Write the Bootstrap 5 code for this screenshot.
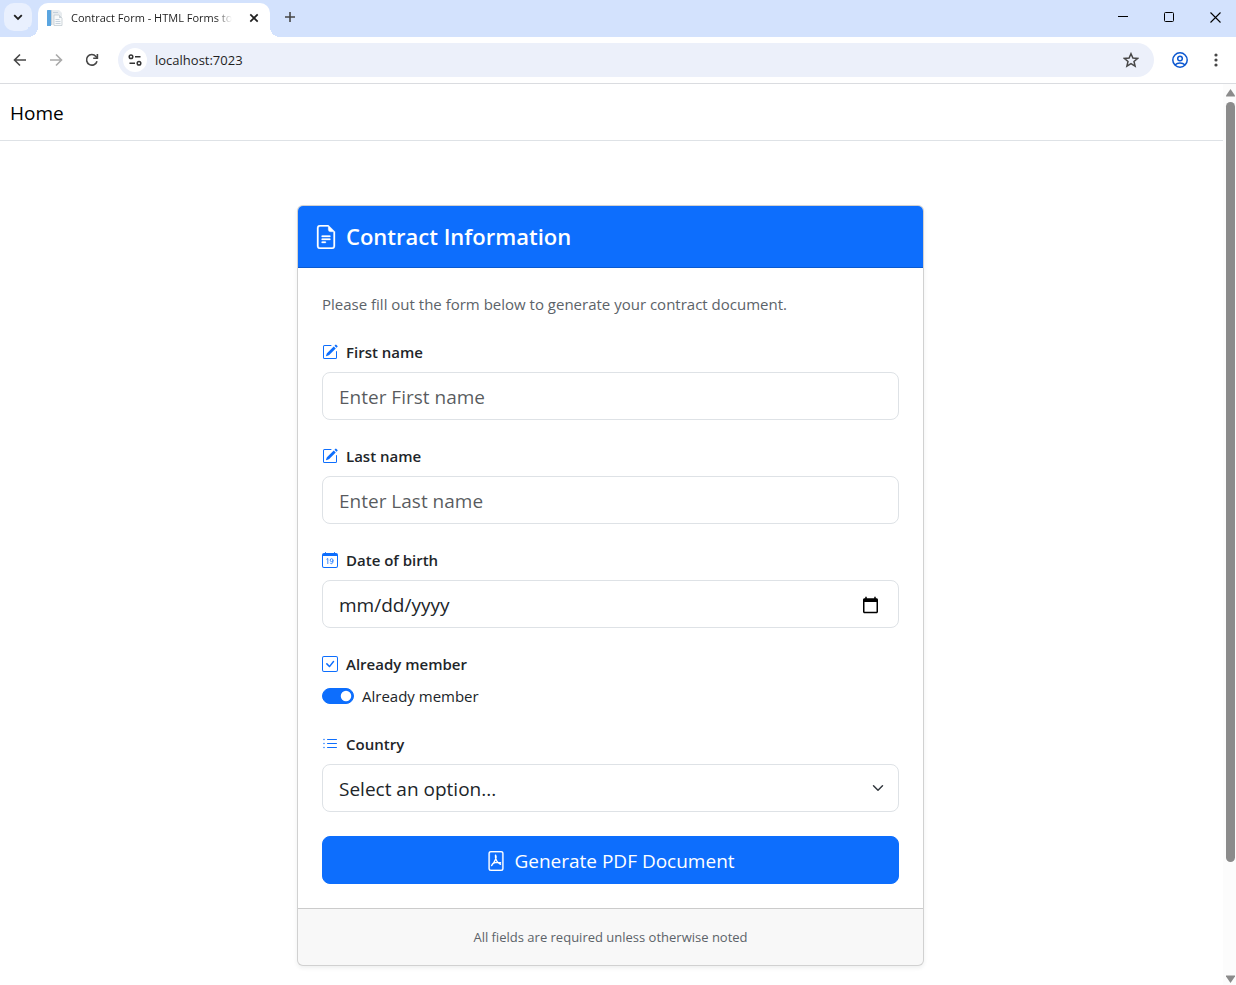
<!DOCTYPE html>
<html lang="en">
<head>
<meta charset="utf-8">
<meta name="viewport" content="width=device-width, initial-scale=1">
<title>Contract Form - HTML Forms to PDF</title>
<link href="https://cdn.jsdelivr.net/npm/bootstrap@5.3.0/dist/css/bootstrap.min.css" rel="stylesheet">
<style>
  body { font-family: "Open Sans", "Noto Sans", sans-serif; font-size: 15px; line-height: 24px; }
  svg { display: block; flex: none; }
  .plain-btn { background: none; border: 0; padding: 0; display: flex; align-items: center; justify-content: center; color: #474747; }

  /* browser window */
  .tab-strip { background: #d3e2fd; height: 37px; padding-left: 4px; }
  .tab-search { width: 28px; height: 28px; border-radius: 10px; background: #e9f0fe; color: #1f1f1f; margin: 3px 6px 0 0; }
  .page-tab { width: 232px; height: 34px; margin-top: 3px; padding: 0 9px 4px 9px; background: #fff; border-radius: 10px 10px 0 0; font-size: 11px; color: #1f1f1f; position: relative; }
  .page-tab::before, .page-tab::after { content: ""; position: absolute; bottom: 0; width: 10px; height: 10px; }
  .page-tab::before { left: -10px; background: radial-gradient(circle at 0 0, #d3e2fd 10px, #fff 10px); }
  .page-tab::after { right: -10px; background: radial-gradient(circle at 100% 0, #d3e2fd 10px, #fff 10px); }
  .tab-title { white-space: nowrap; -webkit-mask-image: linear-gradient(90deg, #000 90%, transparent); mask-image: linear-gradient(90deg, #000 90%, transparent); }
  .new-tab { width: 40px; height: 34px; }
  .win-btns { margin-right: -2px; }
  .win-btn { width: 46px; height: 34px; color: #000; }
  .tool-bar { height: 47px; border-bottom: 1px solid #dadce0; padding: 0 2px; }
  .tool-btn { width: 36px; height: 34px; }
  .address { height: 34px; border-radius: 17px; background: #ecf0fa; padding: 0 5px; margin: 0 8px; font-size: 13px; color: #1f1f1f; }
  .address input { border: 0; background: none; outline: 0; padding: 0; color: inherit; min-width: 0; }
  .site-info { width: 24px; height: 24px; border-radius: 50%; background: #fff; color: #333; margin-right: 8px; }

  /* page */
  .top-nav { height: 57px; border-bottom: 1px solid #dee2e6; padding: 2px 10px 0; }
  .top-nav a { font-size: 19px; color: #000; }
  .form-area { padding: 64px 2px 0 0; }
  .form-card { max-width: 627px; border-color: rgba(0,0,0,.18); }
  .form-card h1 { font-size: 22px; line-height: 29px; }
  .form-card .form-label { font-weight: 600; font-size: 15px; line-height: 24px; }
  .form-card .form-control-lg, .form-card .form-select-lg, .form-card .btn-lg { font-size: 19px; line-height: 30px; height: 48px; padding-top: 9px; padding-bottom: 7px; }
  .form-card .form-check { font-size: 15px; line-height: 24px; min-height: 24px; padding-left: 40px; }
  .form-card .form-check-input { width: 32px; height: 16px; margin-left: -40px; }
  .form-card .card-footer { font-size: 13px; line-height: 24px; border-color: rgba(0,0,0,.18); }
  .grey-text { color: #5c6369; }
  .scroll-track { width: 13px; background: #fcfcfc; padding: 5px 0 2px 3px; }
  .scroll-thumb { width: 9px; background: #8b8b8b; border-radius: 5px; margin: 5px 0; flex: 0 0 85%; }
</style>
</head>
<body class="vh-100 d-flex flex-column overflow-hidden bg-white">

<div class="tab-strip d-flex flex-shrink-0">
  <button class="plain-btn tab-search" aria-label="Search tabs"><svg width="10" height="10" viewBox="0 0 10 10" fill="none" stroke="currentColor" stroke-width="1.8"><path d="M1.2 3.2 5 7l3.800-3.800"/></svg></button>
  <div class="page-tab d-flex align-items-center">
    <svg width="16" height="16" viewBox="0 0 16 16"><rect width="4" height="16" rx=".5" fill="#5aa5e0"/><path d="M4 0h8l3 3v12H4z" fill="#e8ecef"/><path d="M4.500 0v15" stroke="#c6d0d8"/><path d="M7 5h5l3 3v7.500H7z" fill="#f8fafb" stroke="#c3cbd2" stroke-width=".8"/><path d="M12 5v3h3" fill="#cbd3da"/><path d="M8.500 9.500h4M8.500 11.500h5M8.500 13.500h5M6 2.500h5" stroke="#b9c8d6" stroke-width=".8"/></svg>
    <span class="tab-title ms-2 me-auto">Contract Form - HTML Forms to</span>
    <button class="plain-btn" aria-label="Close tab"><svg width="14" height="14" viewBox="0 0 14 14" stroke="#1f1f1f" stroke-width="1.700"><path d="m3.300 3.300 7.400 7.400m0-7.400-7.400 7.400"/></svg></button>
  </div>
  <button class="plain-btn new-tab" aria-label="New tab"><svg width="12" height="12" viewBox="0 0 12 12" stroke="#474747" stroke-width="1.600"><path d="M6 1v10M1 6h10"/></svg></button>
  <div class="win-btns d-flex ms-auto">
    <button class="plain-btn win-btn" aria-label="Minimize"><svg width="10" height="10" stroke="currentColor"><path d="M0 4.500h10"/></svg></button>
    <button class="plain-btn win-btn" aria-label="Maximize"><svg width="10" height="10" fill="none" stroke="currentColor"><rect x=".5" y=".5" width="9" height="9" rx="1"/></svg></button>
    <button class="plain-btn win-btn" aria-label="Close"><svg width="11" height="11" viewBox="0 0 11 11" stroke="currentColor" stroke-width="1.100"><path d="m.5.5 10 10m0-10-10 10"/></svg></button>
  </div>
</div>

<div class="tool-bar d-flex align-items-center flex-shrink-0">
  <button class="plain-btn tool-btn" aria-label="Back"><svg width="14" height="14" viewBox="0 0 14 14" fill="none" stroke="currentColor" stroke-width="1.600"><path d="M13 7H1.500M7 1.500 1.500 7 7 12.500"/></svg></button>
  <button class="plain-btn tool-btn" aria-label="Forward"><svg width="14" height="14" viewBox="0 0 14 14" fill="none" stroke="#aaa" stroke-width="1.600"><path d="M1 7h11.500M7 1.500 12.500 7 7 12.500"/></svg></button>
  <button class="plain-btn tool-btn" aria-label="Reload"><svg width="14" height="14" viewBox="0 0 14 14" fill="none" stroke="currentColor" stroke-width="1.600"><path d="M12 8.200A5.300 5.300 0 1 1 10.900 3.400L12.300 5"/><path d="M12.400 1v4.300H8.200"/></svg></button>
  <div class="address d-flex align-items-center flex-grow-1">
    <button class="plain-btn site-info" aria-label="Site information"><svg width="14" height="12" viewBox="0 0 14 12" fill="none" stroke="currentColor" stroke-width="1.500"><circle cx="3" cy="2.700" r="1.800"/><path d="M7 2.700h5.500M1.500 9.300H7"/><circle cx="11" cy="9.300" r="1.800"/></svg></button>
    <input class="flex-grow-1" type="text" aria-label="Address" value="localhost:7023">
    <button class="plain-btn tool-btn" aria-label="Bookmark"><svg width="16" height="16" viewBox="0 0 16 16" fill="none" stroke="currentColor" stroke-width="1.500"><path d="m8 1.700 1.900 4.300 4.700.4-3.600 3.100 1.100 4.600L8 11.700l-4.100 2.400L5 9.500 1.400 6.400l4.700-.4z"/></svg></button>
  </div>
  <button class="plain-btn tool-btn" aria-label="Profile"><svg width="16" height="16" viewBox="0 0 16 16" fill="none" stroke="#0b57d0" stroke-width="1.500"><circle cx="8" cy="8" r="7.200"/><circle cx="8" cy="6.500" r="2.300"/><path d="M2.900 13c2.800-2.700 7.400-2.700 10.200 0"/></svg></button>
  <button class="plain-btn tool-btn" aria-label="Menu"><svg width="4" height="14" viewBox="0 0 4 14" fill="currentColor"><circle cx="2" cy="2" r="1.600"/><circle cx="2" cy="7" r="1.600"/><circle cx="2" cy="12" r="1.600"/></svg></button>
</div>

<div class="d-flex flex-grow-1 overflow-hidden">
  <div class="flex-grow-1 overflow-hidden">
    <nav class="top-nav d-flex align-items-center"><a class="text-decoration-none" href="#">Home</a></nav>
    <main class="form-area">
      <form class="card form-card shadow-sm mx-auto">
        <div class="card-header bg-primary text-white p-3">
          <h1 class="d-flex align-items-center gap-2 mb-0 fw-semibold">
            <svg width="24" height="24" viewBox="0 0 16 16" fill="currentColor" stroke="currentColor" stroke-width=".2"><path d="M5.500 7a.5.5 0 0 0 0 1h5a.5.5 0 0 0 0-1h-5zM5 9.500a.5.5 0 0 1 .5-.5h5a.5.5 0 0 1 0 1h-5a.5.5 0 0 1-.5-.5zm0 2a.5.5 0 0 1 .5-.5h2a.5.5 0 0 1 0 1h-2a.5.5 0 0 1-.5-.5z"/><path d="M9.500 0H4a2 2 0 0 0-2 2v12a2 2 0 0 0 2 2h8a2 2 0 0 0 2-2V4.500L9.500 0zm0 1v2A1.500 1.500 0 0 0 11 4.500h2V14a1 1 0 0 1-1 1H4a1 1 0 0 1-1-1V2a1 1 0 0 1 1-1h5.500z"/></svg>
            Contract Information
          </h1>
        </div>
        <div class="card-body p-4">
          <p class="grey-text mb-4">Please fill out the form below to generate your contract document.</p>
          <div class="mb-4">
            <label class="form-label d-flex align-items-center gap-2 mb-2" for="first">
              <svg class="text-primary" width="16" height="16" viewBox="0 0 16 16" fill="currentColor"><path d="M15.502 1.940a.5.5 0 0 1 0 .706L14.459 3.690l-2-2L13.502.646a.5.5 0 0 1 .707 0l1.293 1.293zm-1.750 2.456-2-2L4.939 9.210a.5.5 0 0 0-.121.196l-.805 2.414a.25.25 0 0 0 .316.316l2.414-.805a.5.5 0 0 0 .196-.12l6.813-6.814z"/><path d="M1 13.500A1.500 1.500 0 0 0 2.500 15h11a1.500 1.500 0 0 0 1.500-1.500v-6a.5.5 0 0 0-1 0v6a.5.5 0 0 1-.5.5h-11a.5.5 0 0 1-.5-.5v-11a.5.5 0 0 1 .5-.5H9a.5.5 0 0 0 0-1H2.500A1.500 1.500 0 0 0 1 2.500v11z"/></svg>
              First name</label>
            <input class="form-control form-control-lg" id="first" type="text" placeholder="Enter First name">
          </div>
          <div class="mb-4">
            <label class="form-label d-flex align-items-center gap-2 mb-2" for="last">
              <svg class="text-primary" width="16" height="16" viewBox="0 0 16 16" fill="currentColor"><path d="M15.502 1.940a.5.5 0 0 1 0 .706L14.459 3.690l-2-2L13.502.646a.5.5 0 0 1 .707 0l1.293 1.293zm-1.750 2.456-2-2L4.939 9.210a.5.5 0 0 0-.121.196l-.805 2.414a.25.25 0 0 0 .316.316l2.414-.805a.5.5 0 0 0 .196-.12l6.813-6.814z"/><path d="M1 13.500A1.500 1.500 0 0 0 2.500 15h11a1.500 1.500 0 0 0 1.500-1.500v-6a.5.5 0 0 0-1 0v6a.5.5 0 0 1-.5.5h-11a.5.5 0 0 1-.5-.5v-11a.5.5 0 0 1 .5-.5H9a.5.5 0 0 0 0-1H2.500A1.500 1.500 0 0 0 1 2.500v11z"/></svg>
              Last name</label>
            <input class="form-control form-control-lg" id="last" type="text" placeholder="Enter Last name">
          </div>
          <div class="mb-4">
            <label class="form-label d-flex align-items-center gap-2 mb-2" for="birth">
              <svg class="text-primary" width="16" height="16" viewBox="0 0 16 16" fill="currentColor"><path d="M3.500 0a.5.5 0 0 1 .5.5V1h8V.5a.5.5 0 0 1 1 0V1h1a2 2 0 0 1 2 2v11a2 2 0 0 1-2 2H2a2 2 0 0 1-2-2V3a2 2 0 0 1 2-2h1V.5a.5.5 0 0 1 .5-.5zM1 4v10a1 1 0 0 0 1 1h12a1 1 0 0 0 1-1V4H1z"/><path d="M4.500 7.300 5.800 6.500V12M11 8.200a1.400 1.500 0 1 1-2.800 0 1.400 1.500 0 0 1 2.800 0c0 2.600-.6 3.500-1.500 3.500-.6 0-1.100-.3-1.300-.9" fill="none" stroke="currentColor" stroke-width=".8"/></svg>
              Date of birth</label>
            <input class="form-control form-control-lg" id="birth" type="date">
          </div>
          <div class="mb-4">
            <label class="form-label d-flex align-items-center gap-2 mb-2" for="member">
              <svg class="text-primary" width="16" height="16" viewBox="0 0 16 16" fill="currentColor"><path d="M14 1a1 1 0 0 1 1 1v12a1 1 0 0 1-1 1H2a1 1 0 0 1-1-1V2a1 1 0 0 1 1-1h12zM2 0a2 2 0 0 0-2 2v12a2 2 0 0 0 2 2h12a2 2 0 0 0 2-2V2a2 2 0 0 0-2-2H2z"/><path d="M10.970 4.970a.75.75 0 0 1 1.071 1.050l-3.992 4.990a.75.75 0 0 1-1.080.020L4.324 8.384a.75.75 0 1 1 1.060-1.060l2.094 2.093 3.473-4.425a.235.235 0 0 1 .020-.022z"/></svg>
              Already member</label>
            <div class="form-check form-switch mb-0">
              <input class="form-check-input" id="member" type="checkbox" role="switch" checked>
              <label class="form-check-label" for="member">Already member</label>
            </div>
          </div>
          <div class="mb-4">
            <label class="form-label d-flex align-items-center gap-2 mb-2" for="country">
              <svg class="text-primary" width="16" height="16" viewBox="0 0 16 16" fill="currentColor"><path fill-rule="evenodd" d="M5 11.500a.5.5 0 0 1 .5-.5h9a.5.5 0 0 1 0 1h-9a.5.5 0 0 1-.5-.5zm0-4a.5.5 0 0 1 .5-.5h9a.5.5 0 0 1 0 1h-9a.5.5 0 0 1-.5-.5zm0-4a.5.5 0 0 1 .5-.5h9a.5.5 0 0 1 0 1h-9a.5.5 0 0 1-.5-.5zM2 4.200a.7.7 0 1 0 0-1.400.7.7 0 0 0 0 1.400zm0 4a.7.7 0 1 0 0-1.400.7.7 0 0 0 0 1.400zm0 4a.7.7 0 1 0 0-1.400.7.7 0 0 0 0 1.400z"/></svg>
              Country</label>
            <select class="form-select form-select-lg" id="country"><option>Select an option...</option></select>
          </div>
          <button class="btn btn-primary btn-lg w-100 d-flex align-items-center justify-content-center gap-2" type="button">
            <svg width="20" height="20" viewBox="0 0 16 16" fill="currentColor" stroke="currentColor" stroke-width=".2"><path d="M4 0a2 2 0 0 0-2 2v12a2 2 0 0 0 2 2h8a2 2 0 0 0 2-2V2a2 2 0 0 0-2-2H4zm0 1h8a1 1 0 0 1 1 1v12a1 1 0 0 1-1 1H4a1 1 0 0 1-1-1V2a1 1 0 0 1 1-1z"/><path d="M7.700 3.300C8.700 5 7.500 8 4.500 11.600M7.600 3.400C7.200 6.500 9 9.600 11.600 10.600M5.200 10.200Q8 8.700 11.600 9.300" fill="none" stroke-width="1.100" stroke-linecap="round"/></svg>
            Generate PDF Document
          </button>
        </div>
        <div class="card-footer grey-text text-center py-3">All fields are required unless otherwise noted</div>
      </form>
    </main>
  </div>
  <div class="scroll-track d-flex flex-column flex-shrink-0" aria-hidden="true">
    <svg width="9" height="8" viewBox="0 0 9 8" fill="#8b8b8b"><path d="M4.500 0 9 6.500V7.500H0V6.500z"/></svg>
    <div class="scroll-thumb"></div>
    <svg class="mt-auto" width="9" height="8" viewBox="0 0 9 8" fill="#8b8b8b"><path d="M4.500 8 9 1.500V.5H0V1.500z"/></svg>
  </div>
</div>
<script src="https://cdn.jsdelivr.net/npm/bootstrap@5.3.0/dist/js/bootstrap.bundle.min.js"></script>
</body>
</html>
